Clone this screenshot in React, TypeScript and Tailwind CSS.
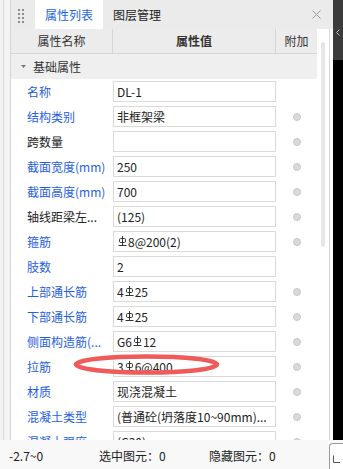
import React from "react";

type Row = {
  label: string;
  value: string;
  blue: boolean;
  radio: boolean;
};

// "#" in a value marks the HRB400 rebar symbol
const ROWS: Row[] = [
  { label: "名称", value: "DL-1", blue: true, radio: false },
  { label: "结构类别", value: "非框架梁", blue: true, radio: true },
  { label: "跨数量", value: "", blue: false, radio: true },
  { label: "截面宽度(mm)", value: "250", blue: true, radio: true },
  { label: "截面高度(mm)", value: "700", blue: true, radio: true },
  { label: "轴线距梁左...", value: "(125)", blue: false, radio: true },
  { label: "箍筋", value: "#8@200(2)", blue: true, radio: true },
  { label: "肢数", value: "2", blue: true, radio: false },
  { label: "上部通长筋", value: "4#25", blue: true, radio: true },
  { label: "下部通长筋", value: "4#25", blue: true, radio: true },
  { label: "侧面构造筋(...", value: "G6#12", blue: true, radio: true },
  { label: "拉筋", value: "3#6@400", blue: true, radio: true },
  { label: "材质", value: "现浇混凝土", blue: true, radio: true },
  { label: "混凝土类型", value: "(普通砼(坍落度10~90mm)...", blue: true, radio: true },
  { label: "混凝土强度", value: "(C30)", blue: true, radio: true },
];

function RebarSymbol() {
  return (
    <svg
      width="9"
      height="11"
      viewBox="0 0 9 11"
      className="inline-block align-[-1px] mx-[1px]"
      fill="none"
      stroke="#333"
      strokeWidth="1"
    >
      <path d="M4.5 0 V9.5" />
      <rect x="1.5" y="2.5" width="6" height="4" rx="1.2" />
      <path d="M0.5 9.5 H8.5" />
    </svg>
  );
}

function Value({ text }: { text: string }) {
  const parts = text.split("#");
  return (
    <>
      {parts.map((p, i) => (
        <React.Fragment key={i}>
          {i > 0 && <RebarSymbol />}
          {p}
        </React.Fragment>
      ))}
    </>
  );
}

function Grip() {
  return (
    <div className="w-[24px] flex justify-start pl-[7px] pt-[9px]">
      <div className="grid grid-cols-2 gap-x-[2px] gap-y-[2px] h-fit">
        {Array.from({ length: 8 }).map((_, i) => (
          <span key={i} className="w-[2px] h-[2px] bg-[#8c8c8c]" />
        ))}
      </div>
    </div>
  );
}

export default function App() {
  return (
    <div className="relative w-[343px] h-[469px] overflow-hidden flex flex-col bg-[#f7f7f7] text-[12px] text-[#333] [font-family:'Noto_Sans_CJK_SC',sans-serif]">
      <div className="h-[440px] flex">
        {/* left dock strip */}
        <div className="w-[11px] flex bg-[#f3f3f3]">
          <span className="w-[3px]" />
          <span className="w-px bg-[#dadada]" />
          <span className="flex-1" />
          <span className="w-px bg-[#d6d6d6]" />
        </div>

        {/* panel */}
        <div className="w-[322px] flex flex-col">
          <div className="h-[29px] flex bg-[#ebebeb]">
            <Grip />
            <div className="w-[68px] bg-white flex items-center justify-center text-[#1b67de]">
              属性列表
            </div>
            <div className="w-[68px] flex items-center justify-center text-[#222]">
              图层管理
            </div>
            <div className="flex-1" />
            <div className="w-[26px] flex items-center justify-center pr-[8px]">
              <svg width="9" height="9" viewBox="0 0 9 9" stroke="#9a9a9a" strokeWidth="1">
                <path d="M0.5 0.5 L8.5 8.5 M8.5 0.5 L0.5 8.5" />
              </svg>
            </div>
          </div>

          <div className="flex-1 flex bg-white overflow-hidden">
            <div className="w-[306px] flex flex-col">
              {/* header */}
              <div className="h-[25px] shrink-0 flex bg-[#ececec] border-b border-[#d6d6d6]">
                <div className="w-[102px] border-r border-[#d6d6d6] flex items-center justify-center">
                  属性名称
                </div>
                <div className="w-[163px] border-r border-[#d6d6d6] flex items-center justify-center font-bold">
                  属性值
                </div>
                <div className="w-[41px] flex items-center justify-center">附加</div>
              </div>

              {/* group */}
              <div className="h-[25px] shrink-0 flex items-center bg-[#efefef]">
                <svg width="5" height="3" viewBox="0 0 5 3" className="ml-[10px] mr-[7px]">
                  <path d="M0 0 H5 L2.5 3 Z" fill="#777" />
                </svg>
                <span>基础属性</span>
              </div>

              {/* rows */}
              {ROWS.map((r) => (
                <div key={r.label} className="h-[25px] shrink-0 flex items-center">
                  <div
                    className={`w-[102px] pl-[16px] whitespace-nowrap ${
                      r.blue ? "text-[#1f60df]" : "text-[#222]"
                    }`}
                  >
                    {r.label}
                  </div>
                  <div className="w-[163px] h-[21px] border border-[#dadada] pl-[3px] flex items-center whitespace-nowrap overflow-hidden text-[#222]">
                    <Value text={r.value} />
                  </div>
                  <div className="w-[41px] flex items-center justify-center">
                    {r.radio && (
                      <span className="w-[8px] h-[8px] rounded-full bg-[#d9d9d9] border border-[#c9c9c9]" />
                    )}
                  </div>
                </div>
              ))}
            </div>

            {/* scrollbar gutter */}
            <div className="w-[12px] pl-[4px] pt-[13px]">
              <div className="w-[4px] h-[205px] rounded-full bg-[#e6e6e6]" />
            </div>
            <div className="w-px bg-[#d8d8d8]" />
            <div className="w-[3px] bg-white" />
          </div>
        </div>

        {/* right dark strip */}
        <div className="w-[10px] flex flex-col bg-black">
          <div className="h-[60px] bg-[#3b3b3b] flex justify-center pt-[29px]">
            <svg width="4" height="7" viewBox="0 0 4 7" fill="none" stroke="#bdbdbd" strokeWidth="1">
              <path d="M3.5 0.5 L0.5 3.5 L3.5 6.5" />
            </svg>
          </div>
        </div>
      </div>

      {/* status bar */}
      <div className="flex-1 flex items-center bg-[#f8f8f8] text-[#222]">
        <span className="w-[99px] pl-[9px] pt-[3px]">-2.7~0</span>
        <span className="w-[110px] pt-[3px]">选中图元：0</span>
        <span className="pt-[3px]">隐藏图元：0</span>
        <div className="ml-auto self-end w-[14px] h-[26px] border-l border-t border-[#9a9a9a] rounded-tl-[4px] bg-white flex items-start pl-[3px] pt-[11px]">
          <svg width="8" height="8" viewBox="0 0 8 8" fill="none" stroke="#555" strokeWidth="1">
            <path d="M0.5 0.5 V7.5 H7" />
          </svg>
        </div>
      </div>

      {/* red annotation ellipse */}
      <svg
        className="absolute left-0 top-0 pointer-events-none"
        width="343"
        height="469"
        viewBox="0 0 343 469"
      >
        <ellipse cx="146.5" cy="364.5" rx="70.5" ry="8" fill="none" stroke="#f05a5a" strokeWidth="4.5" />
      </svg>
    </div>
  );
}
